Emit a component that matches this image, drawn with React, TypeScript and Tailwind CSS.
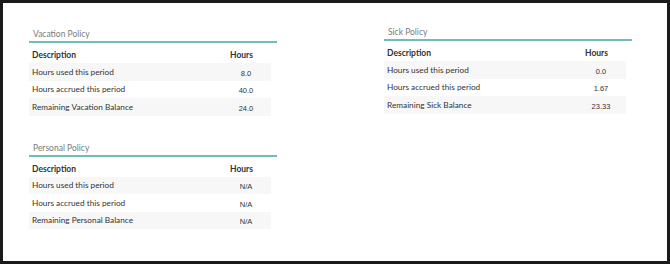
type Row = { label: string; value: string };

type PolicyTableProps = {
  title: string;
  rows: Row[];
};

const PolicyTable = ({ title, rows }: PolicyTableProps) => {
  return (
    <div className="w-[248px]">
      <div className="pl-[4px] text-[8.5px] leading-[11px] text-[#7a7a7a]">{title}</div>
      <div className="mt-[1px] h-[2px] bg-[#6fbcb8]" />
      <div className="mt-[7px] flex items-center justify-between pl-[3px] pr-[24px] text-[8.5px] font-bold leading-[11px] text-[#333]">
        <span>Description</span>
        <span>Hours</span>
      </div>
      <div className="mt-[2px] w-[242px]">
        {rows.map((row, i) => (
          <div
            key={row.label}
            className={`flex h-[17.5px] items-center justify-between pl-[3px] pr-[5px] ${
              i % 2 === 0 ? "bg-[#f7f7f7]" : "bg-white"
            }`}
          >
            <span className="text-[8.25px] text-[#333]">{row.label}</span>
            <span className="w-[40px] pt-[3px] text-center font-['Liberation_Sans',sans-serif] text-[7.5px] text-[#333]">
              {row.value}
            </span>
          </div>
        ))}
      </div>
    </div>
  );
};

export default function App() {
  return (
    <div className="h-[264px] w-[670px] border-[3px] border-[#1a1a1a] bg-white font-['Lato',sans-serif]">
      <div className="flex gap-[107px] pl-[26px] pt-[26px]">
        <div className="flex flex-col gap-[27px]">
          <PolicyTable
            title="Vacation Policy"
            rows={[
              { label: "Hours used this period", value: "8.0" },
              { label: "Hours accrued this period", value: "40.0" },
              { label: "Remaining Vacation Balance", value: "24.0" },
            ]}
          />
          <PolicyTable
            title="Personal Policy"
            rows={[
              { label: "Hours used this period", value: "N/A" },
              { label: "Hours accrued this period", value: "N/A" },
              { label: "Remaining Personal Balance", value: "N/A" },
            ]}
          />
        </div>
        <div className="-mt-[2px]">
          <PolicyTable
            title="Sick Policy"
            rows={[
              { label: "Hours used this period", value: "0.0" },
              { label: "Hours accrued this period", value: "1.67" },
              { label: "Remaining Sick Balance", value: "23.33" },
            ]}
          />
        </div>
      </div>
    </div>
  );
}
